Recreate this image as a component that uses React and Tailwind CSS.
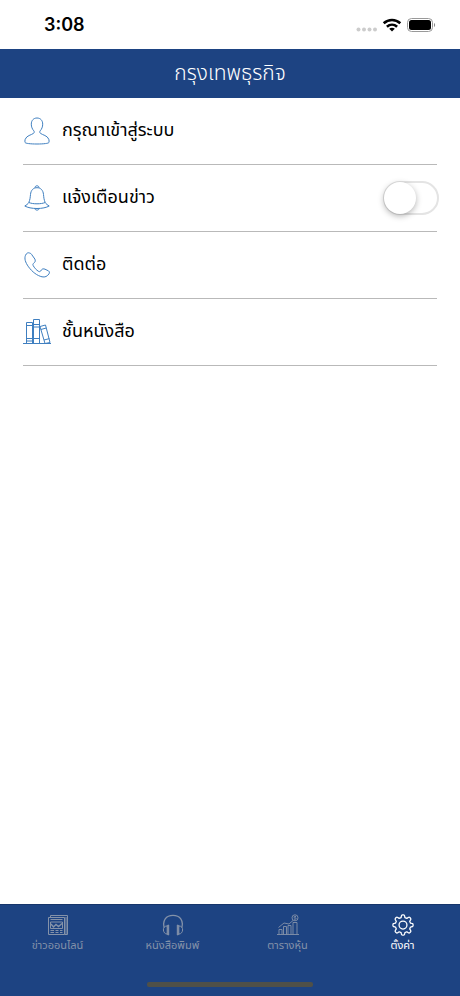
import React, { useState } from 'react';

const TABS = [
  { id: 'news', label: 'ข่าวออนไลน์', Icon: NewspaperIcon },
  { id: 'print', label: 'หนังสือพิมพ์', Icon: HeadphonesIcon },
  { id: 'stocks', label: 'ตารางหุ้น', Icon: StocksIcon },
  { id: 'settings', label: 'ตั้งค่า', Icon: GearIcon },
];

function UserIcon() {
  return (
    <svg viewBox="0 0 26 28" className="w-[26px] h-7" fill="none" stroke="#3f7fc0" strokeLinejoin="round" aria-hidden="true">
      <path d="M13 1C9.500 1 7.300 3.500 7.300 7.200c0 2.600 1 5 2.500 6.600.7.800.5 1.900-.2 2.500C7.500 18 2.500 18.500 1.200 22.300c-.4 1.300-.4 2.500-.1 3.200.4.900 5 1.500 11.900 1.500s11.500-.6 11.900-1.500c.3-.7.300-1.900-.1-3.200-1.300-3.800-6.300-4.300-8.400-6-.7-.6-.9-1.700-.2-2.500 1.500-1.600 2.500-4 2.500-6.600C18.700 3.500 16.500 1 13 1z" />
    </svg>
  );
}

function BellIcon() {
  return (
    <svg viewBox="0 0 26 26" className="w-[26px] h-[26px]" fill="none" stroke="#3f7fc0" strokeLinejoin="round" aria-hidden="true">
      <path d="M11 2.800C11 1.500 11.800.8 13 .8s2 .7 2 2" />
      <path d="M4.800 17.500C6 15 6.200 12.500 6.500 9.500 6.900 5.300 9.200 2.700 13 2.700s6.100 2.600 6.500 6.800c.3 3 .5 5.500 1.700 8 .8 1.500 2.300 2.500 4 3.500-2.800 1.600-7.200 2.500-12.200 2.500S3.600 22.600.8 21c1.700-1 3.200-2 4-3.500z" />
      <path d="M4.800 17.500c2.200.9 5 1.300 8.200 1.300s6-.4 8.200-1.300M10.800 23.500c.2 1 1 1.600 2.200 1.600s2-.6 2.200-1.600" />
    </svg>
  );
}

function PhoneIcon() {
  return (
    <svg viewBox="0 0 26 26" className="w-[26px] h-[26px]" fill="none" stroke="#3f7fc0" strokeLinejoin="round" aria-hidden="true">
      <path d="M5.500 1C4 .3 2.400 1.200 1.500 3.300.2 6.500 1.200 10.200 4.500 14.800c3.800 5.200 8.700 8.900 13.500 10 3 .7 5.400-.5 7-3 .7-1.100.5-2.200-.5-2.900l-3.500-1.700c-1.500-.6-2.700-.4-3.500.6l-.9 1.300c-.5.600-1.300.7-2 .3-2.400-1.500-4.200-3.500-5.500-6-.4-.8-.2-1.500.4-2l.9-.8c.9-.8 1.100-2 .5-3.500L7.500 2.300C7 1.500 6.300 1.100 5.500 1z" />
    </svg>
  );
}

function BooksIcon() {
  return (
    <svg viewBox="0 0 28 26" className="w-7 h-[26px]" fill="none" stroke="#3f7fc0" strokeLinejoin="round" aria-hidden="true">
      <path d="M0 24.500h28" />
      <path d="M3.500 3.500h6v21h-6zM3.500 6.500h6M3.500 19.500h6M3.500 22h6" />
      <path d="M10.500.5h6v24h-6zM10.500 5.500h6M10.500 8h6M10.500 19.500h6" />
      <path d="M17 7.500l5.500-1.500L27 23.500l-5 1zM17.800 10.500l5.500-1.500M21 21l5.400-1.400" />
    </svg>
  );
}

function NewspaperIcon() {
  return (
    <svg viewBox="0 0 22 22" className="w-[22px] h-[22px]" fill="none" stroke="currentColor" aria-hidden="true">
      <path d="M1.500 3.500h16v17h-16zM3.500 3.500v-2h17v19h-3M19 3v17" />
      <path d="M3.500 5.500h12M3.500 8h12v6.500h-12z" />
      <path d="M4 10l2.500 3L9 10.500l2.500 2L15 9.500" strokeWidth="1.400" />
      <path d="M3.500 16.500h3.500M8.500 16.500h3M13 16.500h2.500M3.500 18.500h3.500M8.500 18.500h3M13 18.500h2.500" />
    </svg>
  );
}

function HeadphonesIcon() {
  return (
    <svg viewBox="0 0 22 22" className="w-[22px] h-[22px]" fill="none" stroke="currentColor" aria-hidden="true">
      <path d="M2.200 13.500C.2 6.500 4 1.300 11 1.300s10.800 5.200 8.800 12.200" strokeWidth="1.300" />
      <path d="M5 12C2.800 12 1.200 13.500 1.400 16c.2 2.300 1.600 4 3.600 4" />
      <path d="M17 12c2.200 0 3.800 1.500 3.600 4-.2 2.300-1.600 4-3.600 4" />
      <path d="M5.200 11.500l1.500-.5v10l-1.500-.5zM16.800 11.500l-1.500-.5v10l1.500-.5z" fill="currentColor" />
    </svg>
  );
}

function StocksIcon() {
  return (
    <svg viewBox="0 0 22 22" className="w-[22px] h-[22px]" fill="none" stroke="currentColor" strokeWidth="0.9" aria-hidden="true">
      <path d="M0 20.500h22M2 20.500v-5h3v5M6.500 20.500v-8h3v8M11 20.500v-9h3v9M16 20.500v-12h4v12" />
      <path d="M1.500 13.500L7 9l5 1 4-3.500" />
      <circle cx="18" cy="3.800" r="3" />
      <path d="M19 2.500h-1.500c-.8 0-.8 1.300 0 1.300h1c.8 0 .8 1.400 0 1.400H17" />
    </svg>
  );
}

function GearIcon() {
  return (
    <svg viewBox="0 0 24 24" className="w-[22px] h-[22px]" fill="none" stroke="currentColor" strokeWidth="1.400" strokeLinejoin="round" aria-hidden="true">
      <path d="M10.200 2.200c.1-.8.600-1.200 1.300-1.200h1c.7 0 1.200.4 1.300 1.200l.3 1.700 2.100.9 1.500-1c.6-.4 1.300-.4 1.800.1l.7.7c.5.500.5 1.200.1 1.800l-1 1.500.9 2.100 1.600.3c.8.1 1.200.6 1.200 1.300v1c0 .7-.4 1.200-1.200 1.300l-1.600.3-.9 2.100 1 1.500c.4.600.4 1.300-.1 1.800l-.7.7c-.5.500-1.200.5-1.800.1l-1.500-1-2.100.9-.3 1.500c-.1.800-.6 1.200-1.300 1.200h-1c-.7 0-1.200-.4-1.300-1.200l-.3-1.500-2.100-.9-1.500 1c-.6.400-1.300.4-1.800-.1l-.7-.7c-.5-.5-.5-1.200-.1-1.800l1-1.500-.9-2.100-1.600-.3C1.400 13.800 1 13.300 1 12.600v-1c0-.7.400-1.200 1.200-1.300l1.600-.3.900-2.100-1-1.500c-.4-.6-.4-1.300.1-1.800l.7-.7c.5-.5 1.200-.5 1.800-.1l1.500 1 2.100-.9z" />
      <circle cx="12" cy="12.100" r="4.300" />
    </svg>
  );
}

function StatusBar() {
  return (
    <div className="flex items-center justify-between h-[49px] pl-11 pr-6 font-['Inter','Liberation_Sans',sans-serif]">
      <span className="text-lg font-semibold text-black">3:08</span>
      <div className="flex items-center gap-1">
        <svg viewBox="0 0 22 16" className="w-[22px] h-4" fill="#cccccc" aria-hidden="true">
          <circle cx="2.500" cy="12.500" r="2" />
          <circle cx="8" cy="12.500" r="2" />
          <circle cx="13.500" cy="12.500" r="2" />
          <circle cx="19" cy="12.500" r="2" />
        </svg>
        <svg viewBox="0 0 20 16" className="w-5 h-4" fill="none" stroke="#000" strokeWidth="2.600" aria-hidden="true">
          <path d="M1.700 6.300c4.800-4.400 11.800-4.400 16.600 0M4.900 9.700c3-2.700 7.200-2.700 10.200 0" />
          <path d="M10 14.600L7.200 11.800c1.600-1.400 4-1.400 5.600 0z" fill="#000" stroke="none" />
        </svg>
        <svg viewBox="0 0 30 16" className="w-[30px] h-4" aria-hidden="true">
          <rect x="1.500" y="1.500" width="25" height="13" rx="4" fill="none" stroke="#999" />
          <rect x="3" y="3" width="22" height="10" rx="2.500" fill="#000" />
          <path d="M28 6v4c1.500-.5 1.500-3.500 0-4z" fill="#888" />
        </svg>
      </div>
    </div>
  );
}

function Row({ Icon, children }) {
  return (
    <li className="flex items-center h-[67px] border-b border-[#b9b9b9] text-lg text-black">
      <span className="flex justify-center w-7 mr-[11px]">
        <Icon />
      </span>
      {children}
    </li>
  );
}

export default function App() {
  const [notify, setNotify] = useState(false);
  const [tab, setTab] = useState('settings');

  return (
    <div className="flex flex-col min-h-screen bg-white font-['Noto_Sans_Thai','Noto_Sans',sans-serif]">
      <StatusBar />

      {/* Header */}
      <header className="flex items-center justify-center h-[49px] bg-[#1d4382]">
        <h1 className="text-[21px] font-light text-white">กรุงเทพธุรกิจ</h1>
      </header>

      <main className="flex-1">
        <ul className="mx-[23px]">
          <Row Icon={UserIcon}>
            <a href="#login" className="flex-1">กรุณาเข้าสู่ระบบ</a>
          </Row>
          <Row Icon={BellIcon}>
            <label htmlFor="notify" className="flex-1">แจ้งเตือนข่าว</label>
            <input
              id="notify"
              type="checkbox"
              role="switch"
              checked={notify}
              onChange={(e) => setNotify(e.target.checked)}
              className="appearance-none flex items-center w-14 h-[34px] -mr-0.5 rounded-full border-2 border-[#e4e4e4] bg-white checked:bg-green-500 before:block before:w-8 before:h-8 before:-ml-px before:shrink-0 before:rounded-full before:bg-white before:shadow-[0_2px_6px_rgba(0,0,0,0.3)] checked:before:translate-x-[22px]"
            />
          </Row>
          <Row Icon={PhoneIcon}>
            <a href="#contact" className="flex-1">ติดต่อ</a>
          </Row>
          <Row Icon={BooksIcon}>
            <a href="#shelf" className="flex-1">ชั้นหนังสือ</a>
          </Row>
        </ul>
      </main>

      {/* Bottom tabs */}
      <footer className="flex flex-col justify-between h-[92px] pb-[9px] bg-[#1d4382] border-t border-[#17366b]">
        <nav className="grid grid-cols-4 pt-[9px]">
          {TABS.map(({ id, label, Icon }) => (
            <button
              key={id}
              type="button"
              onClick={() => setTab(id)}
              className={tab === id ? 'flex flex-col items-center text-white' : 'flex flex-col items-center text-[#8492a9]'}
            >
              <Icon />
              <span className="text-[11px] leading-5">{label}</span>
            </button>
          ))}
        </nav>
        <div className="self-center w-[36%] h-[5px] rounded-xs bg-[#4f5048]" />
      </footer>
    </div>
  );
}
